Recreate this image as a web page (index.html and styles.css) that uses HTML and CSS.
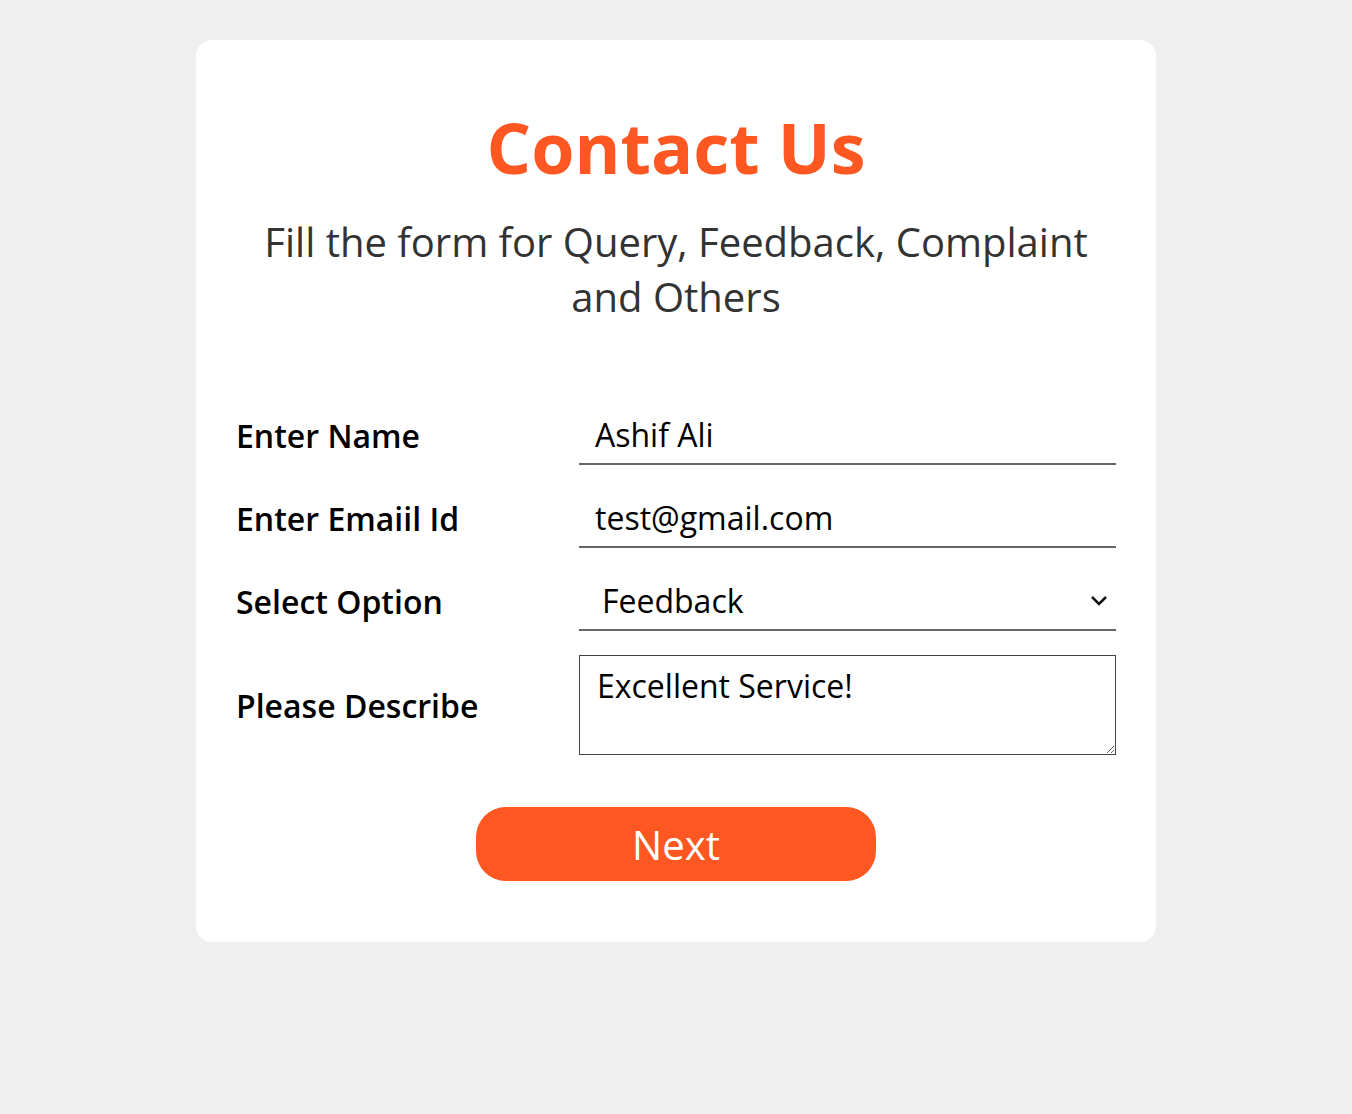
FILE: index.html
```html
<!DOCTYPE html>
<html lang="en">
<head>
<meta charset="utf-8">
<title>Contact Us</title>
<link rel="stylesheet" href="styles.css">
</head>
<body>
<main class="card">
  <h1 class="title">Contact Us</h1>
  <p class="subtitle">Fill the form for Query, Feedback, Complaint and Others</p>
  <form class="form">
    <label class="label" for="name">Enter Name</label>
    <input class="field" id="name" type="text" value="Ashif Ali">
    <label class="label" for="email">Enter Emaiil Id</label>
    <input class="field" id="email" type="email" value="test@gmail.com">
    <label class="label" for="opt">Select Option</label>
    <div class="select-wrap">
      <select class="field select" id="opt">
        <option>Query</option>
        <option selected>Feedback</option>
        <option>Complaint</option>
        <option>Others</option>
      </select>
      <svg class="chevron" width="18" height="12" viewBox="0 0 18 12"><path d="M2 3 L9 10 L16 3" fill="none" stroke="#111" stroke-width="2.5"/></svg>
    </div>
    <label class="label" for="desc">Please Describe</label>
    <textarea class="area" id="desc">Excellent Service!</textarea>
    <div class="actions">
      <button class="btn" type="button">Next</button>
    </div>
  </form>
</main>
</body>
</html>
```

FILE: styles.css
```css
* { box-sizing: border-box; }
body {
  margin: 0;
  background: #efefef;
  font-family: "Open Sans", "Noto Sans", sans-serif;
  color: #000;
}
.card {
  width: 960px;
  margin: 40px auto 0;
  background: #fff;
  border-radius: 16px;
  padding: 62px 40px 61px;
}
.title {
  margin: 0;
  text-align: center;
  color: #ff5722;
  font-size: 70px;
  font-weight: 700;
  line-height: 90px;
}
.subtitle {
  margin: 22px auto 0;
  width: 860px;
  text-align: center;
  color: #333;
  font-size: 40px;
  line-height: 55px;
}
.form {
  margin-top: 82px;
  display: grid;
  grid-template-columns: 343px 1fr;
  row-gap: 24px;
  align-items: center;
}
.label {
  font-size: 32px;
  font-weight: 600;
}
.field {
  width: 100%;
  height: 59px;
  border: none;
  border-bottom: 2px solid #666;
  padding: 0 16px;
  font-family: inherit;
  font-size: 32px;
  color: #000;
  background: #fff;
  outline: none;
}
.select-wrap { position: relative; }
.select {
  appearance: none;
  -webkit-appearance: none;
  padding-left: 23px;
  border-radius: 0;
}
.chevron {
  position: absolute;
  right: 8px;
  top: 22px;
  pointer-events: none;
}
.area {
  width: 100%;
  height: 100px;
  border: 1px solid #444;
  padding: 8px 17px;
  font-family: inherit;
  font-size: 32px;
  color: #000;
  resize: vertical;
  outline: none;
}
.actions {
  grid-column: 1 / -1;
  display: flex;
  justify-content: center;
  margin-top: 28px;
}
.btn {
  width: 400px;
  height: 74px;
  border: none;
  border-radius: 30px;
  background: #ff5722;
  color: #fff;
  font-family: inherit;
  font-size: 40px;
  cursor: pointer;
}
```
